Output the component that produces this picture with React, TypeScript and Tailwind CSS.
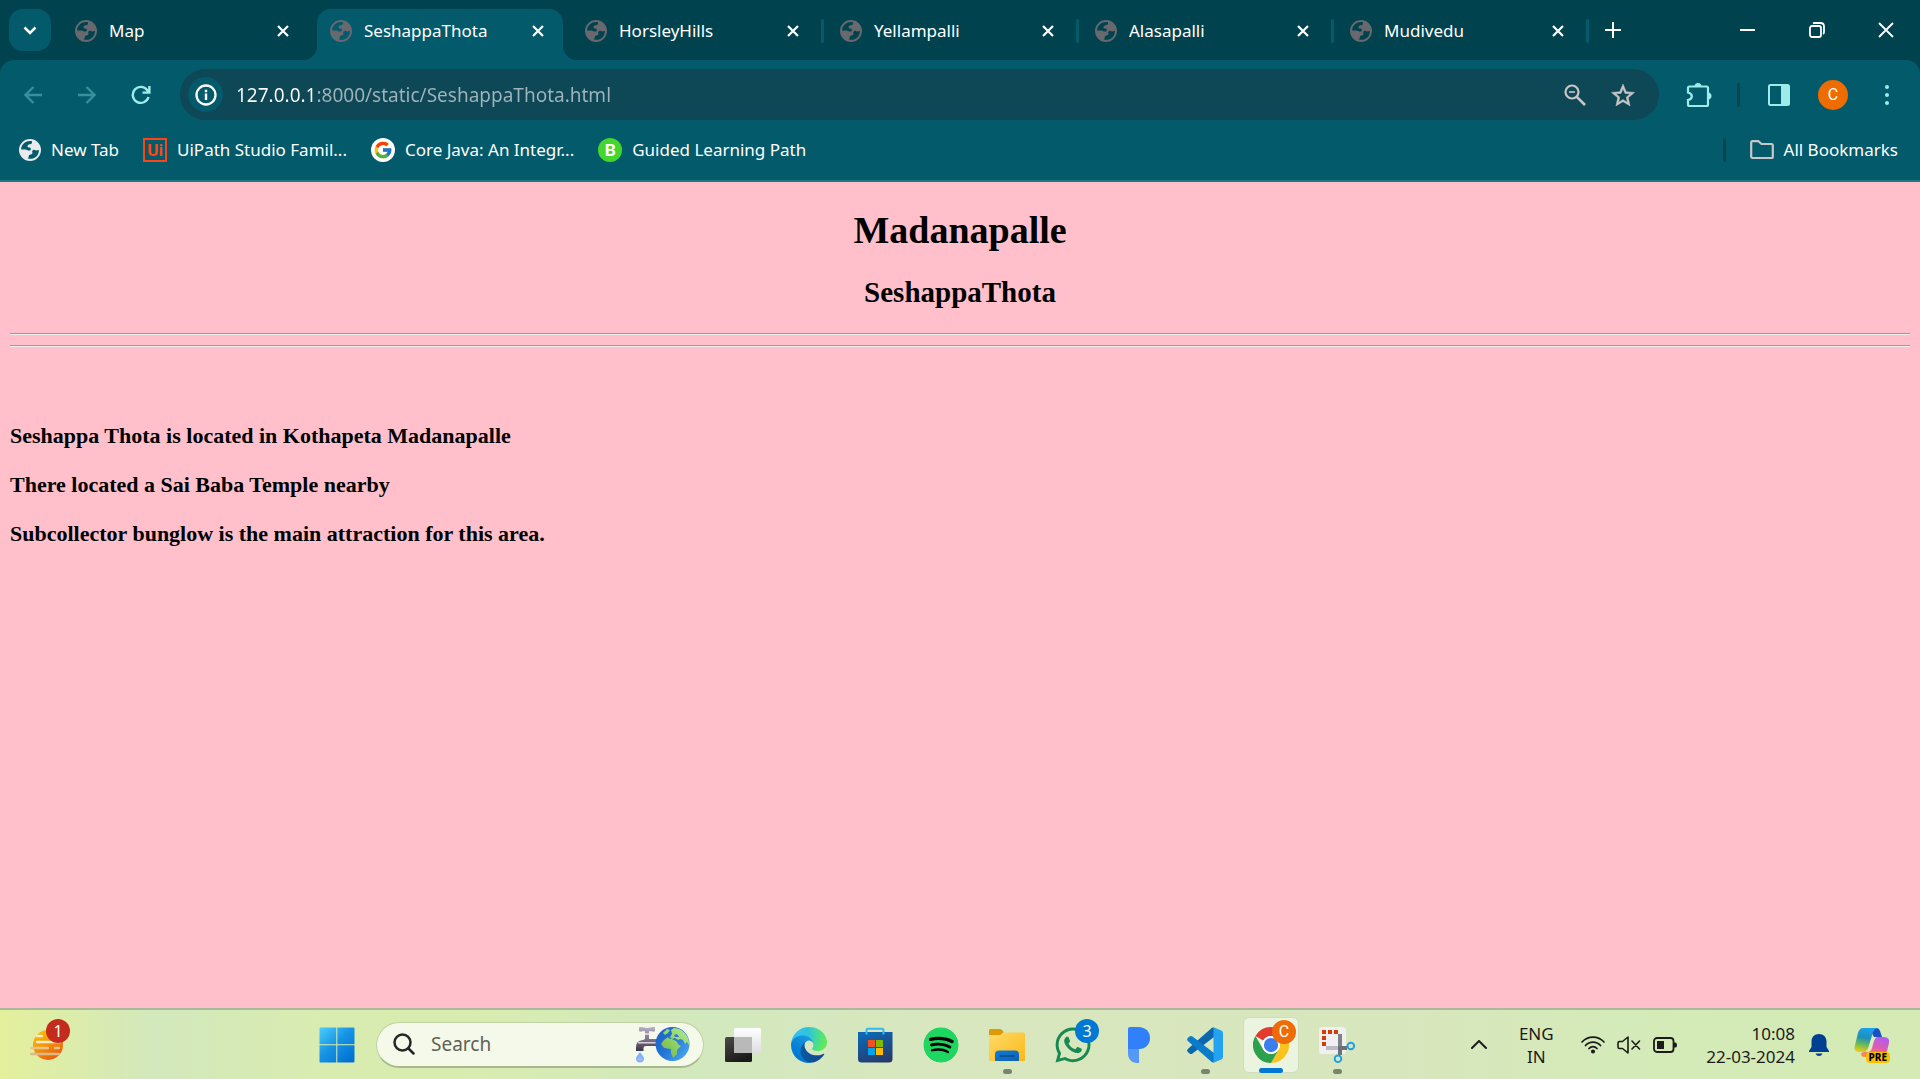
import type { ReactNode } from "react";
import { FcGoogle } from "react-icons/fc";
import { FaSpotify, FaWhatsapp } from "react-icons/fa";

function Globe({ className }: { className: string }) {
  return (
    <svg viewBox="0 0 22 22" className={"size-[22px] shrink-0 " + className} aria-hidden="true">
      <path
        fill="currentColor"
        fillRule="evenodd"
        d="M11 0a11 11 0 1 1 0 22a11 11 0 1 1 0-22zM13 2.3C8 1.2 2.4 4.5 2.1 10.4h4.5c1.2 0 1.9 1 3.4 1.2c1.2.1 1.8-.6 1.8-1.6c0-1.2-1-1.5-1.9-1.4c-1 0-1.5-.6-1.4-1.5c.2-1.4 1.3-1.9 2.7-1.9c1.4 0 2-1 1.8-2.900zM19.9 11.2c-1-.3-1.5.2-2.7.2c-1.500 0-1.700-.8-2.900-.5c-1.300.3-1.200 1.600-.9 2.600c.3 1.300-.6 1.800-1.700 1.900c-1.300.1-1.900.6-1.900 1.800c0 1-.5 1.600-1.200 2.100c5.300 2 11.300-1.700 11.300-8.100z"
      />
    </svg>
  );
}

function Cross({ className }: { className: string }) {
  return (
    <svg viewBox="0 0 12 12" className={className} fill="none" stroke="currentColor" aria-hidden="true">
      <path strokeWidth="2.200" d="M1 1L11 11M11 1L1 11" />
    </svg>
  );
}

const tabs = [
  { title: "Map", active: false, divider: false },
  { title: "SeshappaThota", active: true, divider: false },
  { title: "HorsleyHills", active: false, divider: true },
  { title: "Yellampalli", active: false, divider: true },
  { title: "Alasapalli", active: false, divider: true },
  { title: "Mudivedu", active: false, divider: true },
];

function Tab({ title, active, divider }: { title: string; active: boolean; divider: boolean }) {
  return (
    <div className="flex h-full max-w-[255px] min-w-0 flex-1">
      <div
        className={
          "relative flex min-w-0 flex-1 items-center rounded-t-[14px] px-[13px] pb-2 " +
          (active ? "bg-[#035a6b]" : "")
        }
      >
        {active && (
          <>
            <span className="absolute -left-[14px] bottom-0 size-[14px] overflow-hidden">
              <span className="block size-full rounded-br-[14px] shadow-[6px_6px_0_6px_#035a6b]" />
            </span>
            <span className="absolute -right-[14px] bottom-0 size-[14px] overflow-hidden">
              <span className="block size-full rounded-bl-[14px] shadow-[-6px_6px_0_6px_#035a6b]" />
            </span>
          </>
        )}
        <button
          role="tab"
          aria-selected={active}
          className="flex min-w-0 flex-1 items-center gap-3 text-left text-[17px] leading-6 text-white"
        >
          <Globe className="text-[#67696e]" />
          <span className="truncate">{title}</span>
        </button>
        <button aria-label={"Close " + title} className="flex size-6 shrink-0 items-center justify-center text-white">
          <Cross className="size-3" />
        </button>
      </div>
      <div className="flex w-[9px] items-center justify-center">
        {divider && <span className="mb-2 h-6 w-[3px] rounded-full bg-[#035a6b]" />}
      </div>
    </div>
  );
}

function TabStrip() {
  return (
    <header className="flex h-[51px] items-stretch bg-[#01424f]">
      <button
        aria-label="Search tabs"
        className="mr-[11px] ml-[9px] flex h-[42px] w-[42px] shrink-0 items-center justify-center rounded-[14px] bg-[#035a6b] text-white"
      >
        <svg viewBox="0 0 14 9" className="w-[14px]" fill="none" stroke="currentColor" strokeWidth="2.500" aria-hidden="true">
          <path d="M1.500 1.500L7 7L12.500 1.500" />
        </svg>
      </button>
      <div role="tablist" className="flex min-w-0 flex-1">
        {tabs.map((t) => (
          <Tab key={t.title} {...t} />
        ))}
        <button aria-label="New tab" className="flex h-[42px] w-[42px] shrink-0 items-center justify-center text-white">
          <svg viewBox="0 0 16 16" className="size-4" stroke="currentColor" strokeWidth="2" aria-hidden="true">
            <path d="M8 0V16M0 8H16" />
          </svg>
        </button>
      </div>
      <div className="flex h-[42px] shrink-0 text-white">
        <button aria-label="Minimize" className="flex w-[69px] items-center justify-center">
          <span className="h-0.5 w-[15px] bg-white" />
        </button>
        <button aria-label="Restore" className="flex w-[69px] items-center justify-center">
          <svg viewBox="0 0 16 16" className="size-4" fill="none" stroke="currentColor" strokeWidth="1.800" aria-hidden="true">
            <rect x="1" y="4" width="11" height="11" rx="2" />
            <path d="M4 1.500C4.500 1 5 1 6 1H11.500C13.500 1 15 2.500 15 4.500V10C15 11 15 11.500 14 12" />
          </svg>
        </button>
        <button aria-label="Close window" className="flex w-[69px] items-center justify-center">
          <svg viewBox="0 0 16 16" className="size-4" stroke="currentColor" strokeWidth="1.800" aria-hidden="true">
            <path d="M1 1L15 15M15 1L1 15" />
          </svg>
        </button>
      </div>
    </header>
  );
}

function ToolButton({ label, className = "text-[#9eecea]", children }: { label: string; className?: string; children: ReactNode }) {
  return (
    <button aria-label={label} className={"flex w-[54px] shrink-0 items-center justify-center " + className}>
      {children}
    </button>
  );
}

function Toolbar() {
  return (
    <div className="bg-[#01424f]">
      <nav aria-label="Browser toolbar" className="flex h-[60px] items-stretch rounded-t-[14px] bg-[#035a6b] px-1.5 pt-[9px]">
        <ToolButton label="Back" className="text-[#37909b]">
          <svg viewBox="0 0 18 18" className="size-[18px]" fill="none" stroke="currentColor" strokeWidth="2.300" aria-hidden="true">
            <path d="M18 9H2M9.500 1L1.500 9L9.500 17" />
          </svg>
        </ToolButton>
        <ToolButton label="Forward" className="text-[#37909b]">
          <svg viewBox="0 0 18 18" className="size-[18px]" fill="none" stroke="currentColor" strokeWidth="2.300" aria-hidden="true">
            <path d="M0 9H16M8.500 1L16.500 9L8.500 17" />
          </svg>
        </ToolButton>
        <ToolButton label="Reload">
          <svg viewBox="0 0 20 20" className="size-5" fill="none" stroke="currentColor" strokeWidth="2.400" aria-hidden="true">
            <path d="M17.500 12A8 8 0 1 1 16.500 5.500L18 7.200M18.400 1V7.600H11.500" />
          </svg>
        </ToolButton>
        <div className="ml-3 flex min-w-0 flex-1 items-center rounded-full bg-[#0e4755] pr-6 pl-2">
          <button aria-label="Site information" className="flex size-[35px] shrink-0 items-center justify-center rounded-full bg-[#035a6b] text-white">
            <svg viewBox="0 0 22 22" className="size-[22px]" fill="none" stroke="currentColor" aria-hidden="true">
              <circle cx="11" cy="11" r="9.500" strokeWidth="2.300" />
              <path strokeWidth="2.400" d="M11 9.500V16M11 5.800V8.200" />
            </svg>
          </button>
          <input
            aria-label="Address"
            defaultValue="127.0.0.1:8000/static/SeshappaThota.html"
            className="ml-[13px] min-w-0 flex-1 bg-[linear-gradient(90deg,#ffffff_81px,#9fb5bb_81px)] bg-clip-text text-[19px] leading-8 text-transparent outline-none"
          />
          <button aria-label="Zoom out" className="flex w-[49px] shrink-0 justify-center text-[#c7c7c7]">
            <svg viewBox="0 0 22 22" className="size-[22px]" fill="none" stroke="currentColor" aria-hidden="true">
              <circle cx="8" cy="8" r="6.500" strokeWidth="2.200" />
              <path strokeWidth="2.600" d="M12.800 12.800L21 21" />
              <path strokeWidth="1.600" d="M5 8H11" />
            </svg>
          </button>
          <button aria-label="Bookmark this page" className="ml-3 flex shrink-0 justify-center text-[#c7c7c7]">
            <svg viewBox="2 2 20 19" className="h-[22px] w-6" fill="currentColor" stroke="currentColor" strokeWidth="0.400" aria-hidden="true">
              <path d="M22 9.240l-7.190-.62L12 2 9.190 8.630 2 9.240l5.460 4.730L5.820 21 12 17.270 18.180 21l-1.630-7.030L22 9.240zM12 15.400l-3.760 2.270 1-4.280-3.320-2.880 4.380-.38L12 6.100l1.710 4.040 4.380.38-3.320 2.880 1 4.280L12 15.400z" />
            </svg>
          </button>
        </div>
        <span className="w-[13px]" />
        <ToolButton label="Extensions">
          <svg viewBox="0 0 26 26" className="size-[26px]" aria-hidden="true">
            <path
              fill="none"
              stroke="currentColor"
              strokeWidth="2.200"
              d="M3.500 4.500H20.500Q22 4.500 22 6V22.500Q22 24 20.500 24H3.500Q2 24 2 22.500V18C4.500 17.500 5.800 16 5.800 14.200C5.800 12.400 4.500 11 2 10.500V6Q2 4.500 3.500 4.500Z"
            />
            <path fill="currentColor" d="M8.500 4.500a3.500 3.500 0 0 1 7 0zM22 10.500a3.500 3.500 0 0 1 0 7z" />
          </svg>
        </ToolButton>
        <span className="mr-3 ml-[11px] h-6 w-[3px] shrink-0 self-center rounded-full bg-[#0b4451]" />
        <ToolButton label="Side panel">
          <svg viewBox="0 0 22 22" className="size-[22px]" aria-hidden="true">
            <rect x="1" y="1" width="20" height="20" rx="1.500" fill="none" stroke="currentColor" strokeWidth="2" />
            <path fill="currentColor" d="M13 1H21V21H13Z" />
          </svg>
        </ToolButton>
        <ToolButton label="Profile" className="text-white">
          <span className="flex size-[30px] items-center justify-center rounded-full bg-[#ef6c00] font-['Roboto',sans-serif] text-base leading-5">C</span>
        </ToolButton>
        <ToolButton label="Menu">
          <svg viewBox="0 0 4 22" className="h-[22px] w-1" fill="currentColor" aria-hidden="true">
            <circle cx="2" cy="3" r="2" />
            <circle cx="2" cy="11" r="2" />
            <circle cx="2" cy="19" r="2" />
          </svg>
        </ToolButton>
      </nav>
    </div>
  );
}

function Bookmark({ icon, children }: { icon: ReactNode; children: ReactNode }) {
  return (
    <a href="#" className="flex items-center gap-2.5 text-[17px] leading-6 whitespace-nowrap text-white">
      {icon}
      {children}
    </a>
  );
}

function BookmarksBar() {
  return (
    <nav aria-label="Bookmarks" className="flex h-[62px] items-center gap-6 border-b-2 border-[#217885] bg-[#035a6b] pr-[22px] pl-[19px]">
      <Bookmark icon={<Globe className="text-[#e8eaed]" />}>New Tab</Bookmark>
      <Bookmark
        icon={
          <span className="flex size-6 items-center justify-center border-2 border-[#fa4616] font-['Roboto',sans-serif] text-[17px] leading-4 font-bold text-[#fa4616]">
            Ui
          </span>
        }
      >
        UiPath Studio Famil...
      </Bookmark>
      <Bookmark
        icon={
          <span className="flex size-6 items-center justify-center rounded-full bg-white">
            <FcGoogle className="size-5" />
          </span>
        }
      >
        Core Java: An Integr...
      </Bookmark>
      <Bookmark
        icon={
          <span className="flex size-6 items-center justify-center rounded-full bg-[#43d62f] font-['Lato',sans-serif] text-[17px] leading-5 font-black">B</span>
        }
      >
        Guided Learning Path
      </Bookmark>
      <span className="ml-auto h-6 w-[3px] rounded-full bg-[#0b4451]" />
      <Bookmark
        icon={
          <svg viewBox="0 0 24 20" className="h-5 w-6" fill="none" stroke="#c7c7c7" strokeWidth="2.200" strokeLinejoin="round" aria-hidden="true">
            <path d="M1.200 2.500Q1.200 1.200 2.500 1.200H8.500L11.500 4H21.500Q22.800 4 22.800 5.500V16.500Q22.800 18 21.500 18H2.500Q1.200 18 1.200 16.500Z" />
          </svg>
        }
      >
        All Bookmarks
      </Bookmark>
    </nav>
  );
}

function Page() {
  return (
    <main className="min-h-0 flex-1 overflow-auto bg-[#ffc0cb] px-[10px] pt-[26px] font-['Liberation_Serif',serif] font-bold text-black">
      <h1 className="text-center text-[38px] leading-[44px]">Madanapalle</h1>
      <h2 className="mt-6 mb-6 text-center text-[29px] leading-[33px]">SeshappaThota</h2>
      <hr className="mb-[10px] h-0.5 border-t border-b border-t-[#9a9a9a] border-b-[#eeeeee]" />
      <hr className="h-0.5 border-t border-b border-t-[#9a9a9a] border-b-[#eeeeee]" />
      <div className="mt-[76px] flex flex-col gap-6 text-[22px] leading-[25px]">
        <h3>Seshappa Thota is located in Kothapeta Madanapalle</h3>
        <h3>There located a Sai Baba Temple nearby</h3>
        <h3>Subcollector bunglow is the main attraction for this area.</h3>
      </div>
    </main>
  );
}

function TaskButton({ label, state = "idle", children }: { label: string; state?: "idle" | "running" | "active"; children: ReactNode }) {
  return (
    <button
      aria-label={label}
      className={
        "relative mx-[5px] flex h-14 w-14 shrink-0 items-center justify-center rounded-md " +
        (state === "active" ? "border border-[#cfdcbd] bg-[#ebf4df]" : "")
      }
    >
      {children}
      {state === "running" && <span className="absolute -bottom-px h-[5px] w-[9px] rounded-full bg-[#7a836f]" />}
      {state === "active" && <span className="absolute -bottom-px h-[5px] w-6 rounded-full bg-[#0078d4]" />}
    </button>
  );
}

function Badge({ className, children }: { className: string; children: ReactNode }) {
  return (
    <span className={"absolute flex size-6 items-center justify-center rounded-full text-base leading-5 text-white " + className}>
      {children}
    </span>
  );
}

function Weather() {
  return (
    <svg viewBox="0 0 36 32" className="h-8 w-9" aria-hidden="true">
      <defs>
        <linearGradient id="sun" x1="0" y1="0" x2="0.600" y2="1">
          <stop offset="0" stopColor="#fbc50b" />
          <stop offset="0.500" stopColor="#f29a0c" />
          <stop offset="1" stopColor="#ea5f08" />
        </linearGradient>
      </defs>
      <circle cx="18" cy="16" r="15" fill="url(#sun)" />
      <g strokeLinecap="round" strokeWidth="2.400">
        <path stroke="#fdecc0" d="M7 7H12M7 13H30" />
        <path stroke="#ecc188" d="M1 19H18M25 19H29" />
        <path stroke="#dcb98c" d="M1 25H29" />
      </g>
    </svg>
  );
}

function WindowsLogo() {
  return (
    <svg viewBox="0 0 36 36" className="size-9" aria-hidden="true">
      <defs>
        <linearGradient id="win" gradientUnits="userSpaceOnUse" x1="0" y1="0" x2="30" y2="34">
          <stop offset="0" stopColor="#4fd0fd" />
          <stop offset="0.500" stopColor="#1795e5" />
          <stop offset="1" stopColor="#0273d3" />
        </linearGradient>
      </defs>
      <path
        fill="url(#win)"
        d="M1.500 0.500H17.300V17.300H0.500V1.500Q0.500 0.500 1.500 0.500ZM18.300 0.500H34.500Q35.500 0.500 35.500 1.500V17.300H18.300ZM0.500 18.300H17.300V35.500H1.500Q0.500 35.500 0.500 34.500ZM18.300 18.300H35.500V34.500Q35.500 35.500 34.500 35.500H18.300Z"
      />
    </svg>
  );
}

function FaucetEarth() {
  return (
    <svg viewBox="0 0 56 38" className="h-[38px] w-14 shrink-0" aria-hidden="true">
      <defs>
        <linearGradient id="pipe" x1="0" y1="0" x2="0" y2="1">
          <stop offset="0" stopColor="#b9b1c4" />
          <stop offset="0.500" stopColor="#7f758b" />
          <stop offset="1" stopColor="#3b344a" />
        </linearGradient>
        <linearGradient id="sea" x1="0" y1="0" x2="1" y2="0.800">
          <stop offset="0" stopColor="#1c5fc4" />
          <stop offset="0.500" stopColor="#2173d8" />
          <stop offset="1" stopColor="#4aa6f0" />
        </linearGradient>
        <linearGradient id="land" x1="0" y1="1" x2="1" y2="0">
          <stop offset="0" stopColor="#6fb43c" />
          <stop offset="1" stopColor="#b5ee92" />
        </linearGradient>
      </defs>
      <path fill="url(#pipe)" d="M4 3Q4 1.500 6 2L12 3L18 2Q20 1.500 20 3V5.500Q20 7 18 6.500L14 6V14H22V21H11Q8.500 21 8.500 23V26H1V22Q1 15.500 8 15L10 14V6L6 6.500Q4 7 4 5.500Z" />
      <path fill="#d6d0de" d="M10 8H14V10H10ZM3 17H21V18.500H3Z" />
      <path fill="#7ab6fa" d="M5 27C7 30 9 31.500 9 33.500A4 4 0 0 1 1 33.500C1 31.500 3 30 5 27Z" />
      <circle cx="5" cy="34" r="1.800" fill="#c4a9fb" />
      <circle cx="37.500" cy="19" r="17" fill="url(#sea)" />
      <path
        fill="url(#land)"
        d="M36 5L39 3Q46 3 50.500 9Q54.500 14 54 20L52 17L50 19L48 15L45 14L43 15L40 13L37 14L35 12L37 9ZM28 8L32 4L35 5L33 8L30 10ZM29 15L33 12L34 13.500L37 14L41 16L44 20L46 21L42 25L42 29L38 33L36 28L36 24L29 23L26 19Z"
      />
      <path fill="#2a7ade" d="M39 10L42 9L44 12L40 12Z" />
    </svg>
  );
}

function TaskView() {
  return (
    <svg viewBox="0 0 36 36" className="size-9" aria-hidden="true">
      <defs>
        <linearGradient id="tvDark" x1="0" y1="0" x2="0.500" y2="1">
          <stop offset="0" stopColor="#4d4b48" />
          <stop offset="1" stopColor="#1a1a1a" />
        </linearGradient>
        <linearGradient id="tvLight" x1="0.500" y1="0" x2="0.500" y2="1">
          <stop offset="0" stopColor="#ffffff" />
          <stop offset="1" stopColor="#dedede" />
        </linearGradient>
      </defs>
      <rect x="0" y="10" width="27" height="25" rx="1.500" fill="url(#tvDark)" />
      <rect x="9" y="1" width="27" height="25" rx="1.500" fill="url(#tvLight)" />
      <path fill="#b9b9b9" d="M9 10H27V26H10Q9 26 9 25Z" />
    </svg>
  );
}

function Edge() {
  return (
    <svg viewBox="0 0 256 256" className="size-9" aria-hidden="true">
      <defs>
        <linearGradient id="edgeA" gradientUnits="userSpaceOnUse" x1="63" y1="178" x2="241" y2="178">
          <stop offset="0" stopColor="#0c59a4" />
          <stop offset="1" stopColor="#114a8b" />
        </linearGradient>
        <linearGradient id="edgeB" gradientUnits="userSpaceOnUse" x1="157" y1="80" x2="46" y2="222">
          <stop offset="0" stopColor="#1b9de2" />
          <stop offset="0.200" stopColor="#1595df" />
          <stop offset="0.700" stopColor="#0680d7" />
          <stop offset="1" stopColor="#0078d4" />
        </linearGradient>
        <radialGradient id="edgeC" gradientUnits="userSpaceOnUse" cx="30" cy="50" r="240">
          <stop offset="0" stopColor="#35c1f1" />
          <stop offset="0.400" stopColor="#2fc2df" />
          <stop offset="0.650" stopColor="#43d9a0" />
          <stop offset="1" stopColor="#66eb4e" />
        </radialGradient>
      </defs>
      <g transform="translate(-4.630 -4.920)">
        <path fill="url(#edgeA)" d="M235.680 195.460a93.730 93.730 0 0 1-10.540 4.710 101.870 101.870 0 0 1-35.900 6.460c-47.320 0-88.540-32.550-88.540-74.320A31.480 31.480 0 0 1 117.130 105c-42.800 1.800-53.800 46.400-53.800 72.530 0 73.880 68.090 81.370 82.760 81.370 7.910 0 19.840-2.300 27-4.560l1.310-.44a128.340 128.340 0 0 0 66.600-52.800 4 4 0 0 0-5.320-5.640z" />
        <path fill="url(#edgeB)" d="M110.340 246.340A79.200 79.200 0 0 1 87.600 225a80.720 80.720 0 0 1 29.530-120c3.120-1.470 8.450-4.130 15.540-4a32.350 32.350 0 0 1 25.690 13 31.880 31.880 0 0 1 6.360 18.660c0-.21 24.460-79.600-80-79.600-43.900 0-80 41.660-80 78.210a130.150 130.150 0 0 0 12.110 56 128 128 0 0 0 156.380 67.110 75.550 75.550 0 0 1-62.780-8z" />
        <path fill="url(#edgeC)" d="M156.940 153.780c-.81 1.050-3.300 2.500-3.300 5.660 0 2.610 1.700 5.120 4.720 7.230 14.380 10 41.490 8.680 41.560 8.680a59.560 59.560 0 0 0 30.270-8.350 61.380 61.380 0 0 0 30.430-52.880c.26-22.410-8-37.310-11.340-43.910-21.190-41.450-66.930-65.290-116.670-65.290a128 128 0 0 0-128 126.200c.48-36.540 36.800-66.050 80-66.050 3.500 0 23.460.34 42 10.070 16.340 8.580 24.900 18.940 30.850 29.210 6.180 10.670 7.280 24.150 7.280 29.520s-2.740 13.330-7.800 19.910z" />
      </g>
    </svg>
  );
}

function Store() {
  return (
    <svg viewBox="0 0 36 36" className="size-9" aria-hidden="true">
      <defs>
        <linearGradient id="bag" x1="0.300" y1="0" x2="0.700" y2="1">
          <stop offset="0" stopColor="#0d68b4" />
          <stop offset="1" stopColor="#27396a" />
        </linearGradient>
      </defs>
      <path fill="none" stroke="#34b9ec" strokeWidth="2" d="M9.500 7V3Q9.500 1.800 11 1.800H25Q26.500 1.800 26.500 3V7" />
      <path fill="url(#bag)" d="M1 5H35.500V32Q35.500 35.500 32 35.500H4.500Q1 35.500 1 32Z" />
      <path fill="none" stroke="#34b9ec" strokeWidth="2" d="M9.500 5V7.500M26.500 5V7.500" />
      <path fill="#f25022" d="M11 13H18V20H11Z" />
      <path fill="#7fba00" d="M19 13H26V20H19Z" />
      <path fill="#00a4ef" d="M11 21H18V28H11Z" />
      <path fill="#ffb900" d="M19 21H26V28H19Z" />
    </svg>
  );
}

function Explorer() {
  return (
    <svg viewBox="0 0 36 36" className="size-9" aria-hidden="true">
      <defs>
        <linearGradient id="fold" x1="0" y1="0" x2="1" y2="1">
          <stop offset="0" stopColor="#ffda6b" />
          <stop offset="1" stopColor="#fbb916" />
        </linearGradient>
        <linearGradient id="clip" x1="0" y1="0" x2="1" y2="1">
          <stop offset="0" stopColor="#0d7dd8" />
          <stop offset="1" stopColor="#1060b4" />
        </linearGradient>
      </defs>
      <path fill="#dd9a05" d="M0 3.500Q0 2 1.500 2H11Q12 2 13 3L15 5.500L12 9H0Z" />
      <path fill="url(#fold)" d="M0 8H10Q11.500 8 12.500 7L14 5.500H34.500Q36 5.500 36 7V34H0Z" />
      <path fill="url(#clip)" d="M6 34V27.500Q6 23.500 10 23.500H26Q30 23.500 30 27.500V34Z" />
      <path stroke="#0a4a8c" strokeWidth="1.500" strokeLinecap="round" d="M11 29H25" />
    </svg>
  );
}

function VsCode() {
  return (
    <svg viewBox="0 0 36 36" className="size-9" aria-hidden="true">
      <path fill="#0a66ad" d="M27 0.500V10L5.500 26.500Q4 27.500 2.500 26.500L0.800 25Q-0.500 23.500 0.800 22L25 0.800Z" />
      <path fill="#0a7cc9" d="M27 35.500V26L5.500 9.500Q4 8.500 2.500 9.500L0.800 11Q-0.500 12.500 0.800 14L25 35.200Z" />
      <path fill="#23a3ef" d="M26.500 0.300L34.300 3.500Q36 4.300 36 6V30Q36 31.700 34.300 32.500L26.500 35.700Z" />
    </svg>
  );
}

function Chrome() {
  return (
    <svg viewBox="0 0 48 48" className="size-9" aria-hidden="true">
      <path fill="#e33b2e" d="M24 0A24 24 0 0 1 44.785 12H24A12 12 0 0 0 13.608 18L3.215 12A24 24 0 0 1 24 0Z" />
      <path fill="#fcc31e" d="M44.785 12A24 24 0 0 1 24 48L34.392 30A12 12 0 0 0 34.392 18L32 12Z" />
      <path fill="#2da04e" d="M3.215 12A24 24 0 0 0 24 48L34.392 30A12 12 0 0 1 13.608 30Z" />
      <circle cx="24" cy="24" r="12" fill="#ffffff" />
      <circle cx="24" cy="24" r="9.500" fill="#3b7ded" />
    </svg>
  );
}

function Snip() {
  return (
    <svg viewBox="0 0 36 36" className="size-9" fill="none" aria-hidden="true">
      <rect width="27" height="27" rx="3" fill="#f0f0f2" />
      <path fill="#d83b01" d="M3 3H7V7H3ZM9 3H13V7H9ZM15 3H19V7H15ZM3 9H7V13H3ZM3 15H7V19H3Z" />
      <path stroke="#b9bdc2" strokeWidth="4" d="M7 21H21" />
      <path stroke="#7d8288" strokeWidth="4" d="M21 7V20" />
      <path stroke="#6b7177" strokeWidth="4" d="M19 21H28M21 20V28" />
      <circle cx="31.800" cy="19" r="3.300" stroke="#1fa0e6" strokeWidth="1.900" />
      <circle cx="19" cy="31.800" r="3.300" stroke="#1fa0e6" strokeWidth="1.900" />
    </svg>
  );
}

function Copilot() {
  return (
    <svg viewBox="0 0 36 30" className="h-[30px] w-9" aria-hidden="true">
      <defs>
        <linearGradient id="copA" x1="0.500" y1="0" x2="0.300" y2="1">
          <stop offset="0" stopColor="#1aa0f0" />
          <stop offset="0.400" stopColor="#1e8fb8" />
          <stop offset="0.700" stopColor="#6fbb57" />
          <stop offset="1" stopColor="#f2cb12" />
        </linearGradient>
        <linearGradient id="copB" x1="0.700" y1="0" x2="0.300" y2="1">
          <stop offset="0" stopColor="#b05cf0" />
          <stop offset="0.500" stopColor="#e05cae" />
          <stop offset="1" stopColor="#ff8a4c" />
        </linearGradient>
      </defs>
      <path fill="#1b4fc4" d="M15 1H22Q25 1 26 4L28 10H20Z" />
      <path fill="url(#copB)" d="M21 10H30Q36 10 35 16L33 24Q32 30 26 30H10Q7 30 7 26L13 24Q16 24 17 20L19 13Q19.500 10 21 10Z" />
      <path fill="url(#copA)" d="M9 1H23Q20 2 19 5L14.500 20Q13 25 9 25H5Q-1 25 1 18L4 6Q5.500 1 9 1Z" />
      <path fill="#dcecc0" d="M20 10H23Q21 11 20 14L18 21Q17 25 13 25H11Q14 24 15 20L17 13Q18 10 20 10Z" />
    </svg>
  );
}

function Taskbar() {
  return (
    <footer className="flex h-[71px] shrink-0 items-center border-t-2 border-[#aab99a] bg-[linear-gradient(90deg,#e4f09c_0%,#d3e8bc_8%,#d9ecb0_17%,#d9ecb0_24%,#d2e8bd_36%,#d8e7bf_48%,#d8e6bd_72%,#d4ebb8_86%,#d5eab4_100%)] pl-6 text-[#1b1b1b]">
      <button aria-label="Weather, 1 alert" className="relative mr-[241px] flex size-12 items-center justify-center">
        <Weather />
        <Badge className="-top-0.5 right-0.5 bg-[#c42b1c]">1</Badge>
      </button>
      <div className="flex min-w-0 items-center">
        <button aria-label="Start" className="mr-[15px] flex size-12 items-center justify-center">
          <WindowsLogo />
        </button>
        <label className="mr-1.5 flex h-[46px] w-[328px] items-center rounded-full border border-b-2 border-[#c0d1a4] border-b-[#a7b98c] bg-[#f4f9e9] pr-3 pl-4">
          <svg viewBox="0 0 22 22" className="size-[22px] shrink-0" fill="none" stroke="#262626" strokeWidth="2.500" strokeLinecap="round" aria-hidden="true">
            <circle cx="9.500" cy="9.500" r="8" />
            <path d="M15.500 15.500L20.500 20.500" />
          </svg>
          <input
            type="search"
            aria-label="Search"
            placeholder="Search"
            className="ml-4 min-w-0 flex-1 bg-transparent text-[19px] leading-6 outline-none placeholder:text-[#5d6157]"
          />
          <FaucetEarth />
        </label>
        <TaskButton label="Task view"><TaskView /></TaskButton>
        <TaskButton label="Microsoft Edge"><Edge /></TaskButton>
        <TaskButton label="Microsoft Store"><Store /></TaskButton>
        <TaskButton label="Spotify">
          <span className="flex size-[34px] items-center justify-center rounded-full bg-black">
            <FaSpotify className="size-9 shrink-0 text-[#1ed760]" />
          </span>
        </TaskButton>
        <TaskButton label="File Explorer" state="running"><Explorer /></TaskButton>
        <TaskButton label="WhatsApp">
          <FaWhatsapp className="size-10 text-[#168a51]" />
          <Badge className="top-0.5 right-0.5 bg-[#0078d4]">3</Badge>
        </TaskButton>
        <TaskButton label="Pandora">
          <svg viewBox="0 0 22 36" className="h-9 w-[22px]" aria-hidden="true">
            <path fill="#2f80fa" d="M2 0H10C18 0 22 5 22 11C22 17 18 22 11 22H0V2Q0 0 2 0Z" />
            <path fill="#5598f6" d="M0 22H11V36H9C4 36 0 32 0 27Z" />
          </svg>
        </TaskButton>
        <TaskButton label="Visual Studio Code" state="running"><VsCode /></TaskButton>
        <TaskButton label="Google Chrome" state="active">
          <Chrome />
          <Badge className="top-0.5 right-0.5 bg-[#ee6b05] font-['Roboto',sans-serif]">C</Badge>
        </TaskButton>
        <TaskButton label="Snipping Tool" state="running"><Snip /></TaskButton>
      </div>
      <div className="ml-auto flex shrink-0 items-center pr-[30px]">
        <button aria-label="Show hidden icons" className="flex size-8 items-center justify-center">
          <svg viewBox="0 0 16 9" className="w-4" fill="none" stroke="currentColor" strokeWidth="2" strokeLinecap="round" aria-hidden="true">
            <path d="M1 8L8 1L15 8" />
          </svg>
        </button>
        <button aria-label="Input language" className="ml-[19px] flex w-[44px] flex-col items-center text-[17px] leading-[23px]">
          <span>ENG</span>
          <span>IN</span>
        </button>
        <button aria-label="Network, volume and battery" className="ml-[23px] flex items-center gap-3">
          <svg viewBox="0 0 24 18" className="h-[18px] w-6" fill="none" stroke="currentColor" strokeWidth="1.700" strokeLinecap="round" aria-hidden="true">
            <path d="M1 6C7 -0.500 17 -0.500 23 6M4.500 9.500C8.500 5 15.500 5 19.500 9.500M8 12.500C10.300 10 13.700 10 16 12.500" />
            <circle cx="12" cy="15.500" r="1.200" fill="currentColor" />
          </svg>
          <svg viewBox="0 0 24 18" className="h-[18px] w-6" fill="none" stroke="currentColor" strokeWidth="1.600" strokeLinejoin="round" strokeLinecap="round" aria-hidden="true">
            <path d="M11 1V17L5.500 12.500H2.500Q1 12.500 1 11V7Q1 5.500 2.500 5.500H5.500ZM15 5L22.500 13M22.500 5L15 13" />
          </svg>
          <svg viewBox="0 0 24 16" className="h-4 w-6" fill="none" stroke="currentColor" strokeWidth="1.800" aria-hidden="true">
            <rect x="1" y="1" width="19.500" height="14" rx="3" />
            <path fill="currentColor" stroke="none" d="M4 4H11V12H4ZM21 5.500H22.500Q24 5.500 24 8Q24 10.500 22.500 10.500H21Z" />
          </svg>
        </button>
        <button aria-label="Clock" className="ml-[29px] flex flex-col items-end text-[17px] leading-[23px]">
          <time>10:08</time>
          <time>22-03-2024</time>
        </button>
        <button aria-label="Notifications" className="ml-[14px] flex items-center">
          <svg viewBox="0 0 20 22" className="h-[22px] w-5" fill="#003f92" aria-hidden="true">
            <path d="M10 0C14.500 0 17.500 3 17.500 7.500V13L20 17V18H0V17L2.500 13V7.500C2.500 3 5.500 0 10 0ZM6.500 19.500H13.500Q12.500 22 10 22Q7.500 22 6.500 19.500Z" />
          </svg>
        </button>
        <button aria-label="Copilot preview" className="relative ml-[25px] flex h-9 w-9 items-start">
          <Copilot />
          <span className="absolute right-0 bottom-0 rounded-sm bg-[#fcc000] px-[3px] text-[10px] leading-[11px] font-extrabold text-black">PRE</span>
        </button>
      </div>
    </footer>
  );
}

export default function App() {
  return (
    <div className="flex h-screen flex-col overflow-hidden font-['Noto_Sans',sans-serif]">
      <div className="shrink-0 bg-[#01424f] pt-[9px]">
        <TabStrip />
        <Toolbar />
        <BookmarksBar />
      </div>
      <Page />
      <Taskbar />
    </div>
  );
}
